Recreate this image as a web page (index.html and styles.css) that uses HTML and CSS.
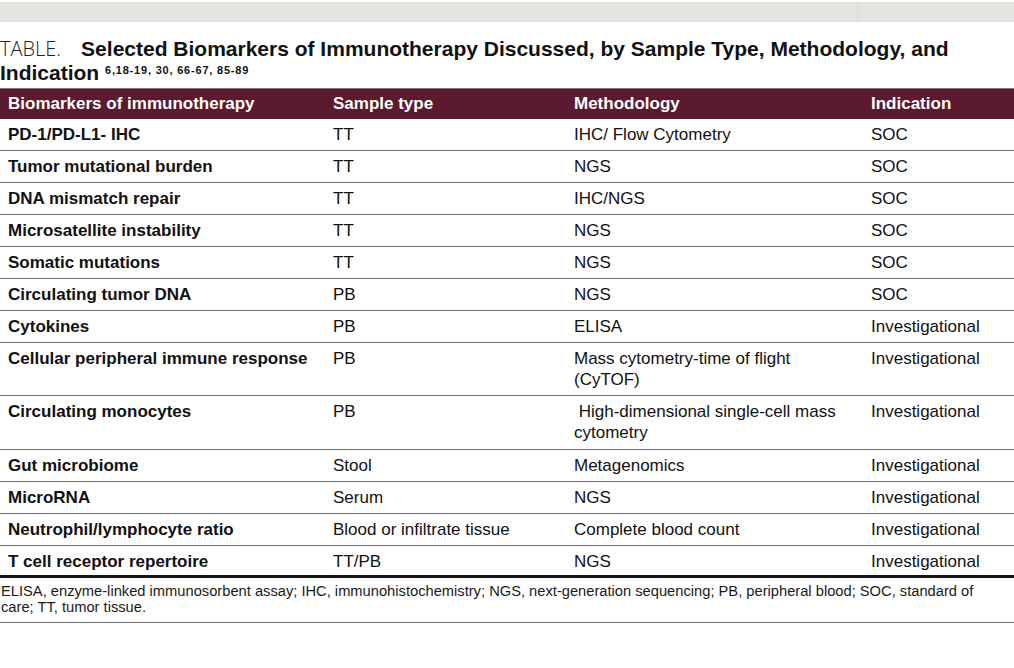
FILE: index.html
```html
<!DOCTYPE html>
<html lang="en">
<head>
<meta charset="utf-8">
<title>Selected Biomarkers of Immunotherapy</title>
<link rel="stylesheet" href="styles.css">
</head>
<body>
<div class="topbar"><div class="topbar-main"></div><div class="topbar-side"></div></div>
<div class="caption">
  <span class="caption-label">TABLE.</span><span class="caption-title">Selected Biomarkers of Immunotherapy Discussed, by Sample Type, Methodology, and Indication</span> <sup class="refs">6,18-19, 30, 66-67, 85-89</sup>
</div>
<table class="bio-table">
  <colgroup>
    <col class="c1"><col class="c2"><col class="c3"><col class="c4">
  </colgroup>
  <thead>
    <tr><th>Biomarkers of immunotherapy</th><th>Sample type</th><th>Methodology</th><th>Indication</th></tr>
  </thead>
  <tbody>
    <tr><td class="name">PD-1/PD-L1- IHC</td><td>TT</td><td>IHC/ Flow Cytometry</td><td>SOC</td></tr>
    <tr><td class="name">Tumor mutational burden</td><td>TT</td><td>NGS</td><td>SOC</td></tr>
    <tr><td class="name">DNA mismatch repair</td><td>TT</td><td>IHC/NGS</td><td>SOC</td></tr>
    <tr><td class="name">Microsatellite instability</td><td>TT</td><td>NGS</td><td>SOC</td></tr>
    <tr><td class="name">Somatic mutations</td><td>TT</td><td>NGS</td><td>SOC</td></tr>
    <tr><td class="name">Circulating tumor DNA</td><td>PB</td><td>NGS</td><td>SOC</td></tr>
    <tr><td class="name">Cytokines</td><td>PB</td><td>ELISA</td><td>Investigational</td></tr>
    <tr><td class="name">Cellular peripheral immune response</td><td>PB</td><td>Mass cytometry-time of flight<br>(CyTOF)</td><td>Investigational</td></tr>
    <tr class="tall"><td class="name">Circulating monocytes</td><td>PB</td><td>&nbsp;High-dimensional single-cell mass<br>cytometry</td><td>Investigational</td></tr>
    <tr><td class="name">Gut microbiome</td><td>Stool</td><td>Metagenomics</td><td>Investigational</td></tr>
    <tr><td class="name">MicroRNA</td><td>Serum</td><td>NGS</td><td>Investigational</td></tr>
    <tr><td class="name">Neutrophil/lymphocyte ratio</td><td>Blood or infiltrate tissue</td><td>Complete blood count</td><td>Investigational</td></tr>
    <tr class="last"><td class="name">T cell receptor repertoire</td><td>TT/PB</td><td>NGS</td><td>Investigational</td></tr>
  </tbody>
</table>
<p class="footnote">ELISA, enzyme-linked immunosorbent assay; IHC, immunohistochemistry; NGS, next-generation sequencing; PB, peripheral blood; SOC, standard of care; TT, tumor tissue.</p>
</body>
</html>
```

FILE: styles.css
```css
html, body {
  margin: 0;
  padding: 0;
  background: #fff;
}
body {
  width: 1014px;
  height: 668px;
  overflow: hidden;
  font-family: "Liberation Sans", Arial, sans-serif;
  color: #111;
}
.topbar {
  display: flex;
  margin-top: 2px;
  height: 20px;
}
.topbar-main {
  width: 857px;
  background: #e4e3dd;
}
.topbar-side {
  flex: 1;
  background: #e4e3dd;
  border-left: 1px solid #dcdbd4;
}
.caption {
  margin-top: 15px;
  height: 48px;
  font-size: 21px;
  line-height: 24px;
  width: 960px;
}
.caption-label {
  font-family: "Open Sans", "Liberation Sans", sans-serif;
  font-weight: 300;
  font-size: 20px;
  line-height: 24px;
  margin-right: 20px;
  color: #222;
}
.caption-title {
  font-weight: bold;
  font-size: 21px;
  line-height: 24px;
}
.refs {
  font-size: 11px;
  font-weight: bold;
  letter-spacing: 0.8px;
  vertical-align: 6px;
  line-height: 0;
}
.bio-table {
  margin-top: 3px;
  width: 1014px;
  border-collapse: collapse;
  table-layout: fixed;
  font-size: 17px;
}
.c1 { width: 325px; }
.c2 { width: 241px; }
.c3 { width: 297px; }
.c4 { width: 151px; }
.bio-table th {
  background: #5b1a2e;
  color: #fff;
  text-align: left;
  font-weight: bold;
  font-size: 17px;
  line-height: 20px;
  padding: 5px 0 5px 8px;
  border-top: 1px solid #7a7a7a;
}
.bio-table td {
  text-align: left;
  vertical-align: top;
  line-height: 21px;
  padding: 5px 0 5px 8px;
  border-bottom: 1px solid #6d6d6d;
  white-space: nowrap;
}
.bio-table td.name {
  font-weight: bold;
}
.bio-table tr.tall td {
  padding-bottom: 6px;
}
.bio-table tr.last td {
  padding-bottom: 3px;
  border-bottom: 3px solid #151515;
}
.footnote {
  margin: 0;
  padding: 5px 30px 7px 1px;
  font-size: 14.7px;
  line-height: 16px;
  color: #1a1a1a;
  border-bottom: 1px solid #6d6d6d;
  width: 983px;
}
```
